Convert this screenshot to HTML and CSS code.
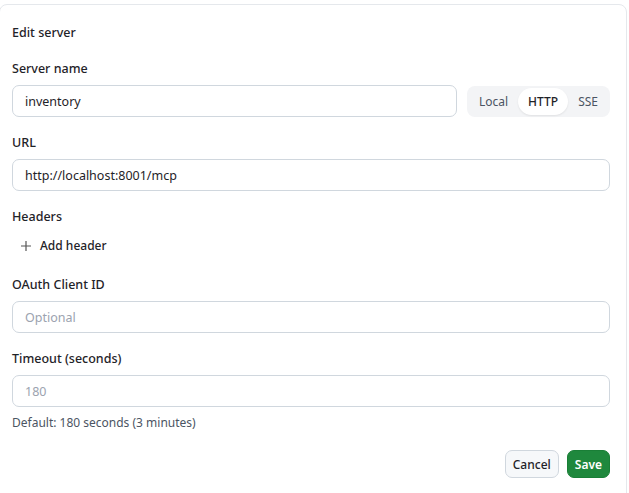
FILE: index.html
```html
<!DOCTYPE html>
<html>
<head>
    <title>Edit server</title>
    <link rel="stylesheet" href="styles.css">
</head>
<body>
    <div class="card">
        <h2 class="title">Edit server</h2>

        <div class="form-group">
            <label for="name">Server name</label>
            <div class="name-row">
                <input type="text" id="name" value="inventory">
                <div class="segmented">
                    <button type="button" class="seg">Local</button>
                    <button type="button" class="seg active">HTTP</button>
                    <button type="button" class="seg">SSE</button>
                </div>
            </div>
        </div>

        <div class="form-group">
            <label for="url">URL</label>
            <input type="text" id="url" value="http://localhost:8001/mcp">
        </div>

        <div class="form-group headers">
            <label>Headers</label>
            <button type="button" class="add-btn">
                <svg width="12" height="12" viewBox="0 0 12 12"><path d="M6 1v10M1 6h10" stroke="#555" stroke-width="1.2" fill="none"/></svg>
                Add header
            </button>
        </div>

        <div class="form-group">
            <label for="client">OAuth Client ID</label>
            <input type="text" id="client" placeholder="Optional">
        </div>

        <div class="form-group">
            <label for="timeout">Timeout (seconds)</label>
            <input type="text" id="timeout" placeholder="180">
            <p class="hint">Default: 180 seconds (3 minutes)</p>
        </div>

        <div class="actions">
            <button type="button" class="btn cancel">Cancel</button>
            <button type="button" class="btn save">Save</button>
        </div>
    </div>
</body>
</html>
```

FILE: styles.css
```css
body {
    margin: 0;
    background: #fff;
    font-family: "Noto Sans", "Open Sans", sans-serif;
    font-size: 12.5px;
    color: #1f2328;
}

.card {
    margin: 4px 2px 0 -1px;
    padding: 15px 16px 40px 12px;
    border: 1px solid #e5e8ec;
    border-radius: 8px;
    min-height: 500px;
}

.title {
    margin: 0 0 13px;
    font-size: 12.5px;
    font-weight: 500;
    line-height: 26px;
}

.form-group {
    margin-bottom: 16px;
}

.headers {
    margin-bottom: 17px;
}

label {
    display: block;
    font-weight: 500;
    line-height: 20px;
    margin-bottom: 6px;
}

input[type="text"] {
    box-sizing: border-box;
    width: 100%;
    height: 32px;
    padding: 0 12px;
    border: 1px solid #d0d7de;
    border-radius: 7px;
    font: inherit;
    color: #1f2328;
}

input::placeholder {
    color: #9ca3af;
}

.name-row {
    display: flex;
    gap: 10px;
    align-items: center;
}

.name-row input {
    flex: 1;
}

.segmented {
    display: flex;
    padding: 2px;
    background: #f3f4f6;
    border-radius: 8px;
}

.seg {
    border: none;
    background: none;
    font: inherit;
    font-size: 12px;
    color: #4b5563;
    padding: 0 10px;
    height: 27px;
    border-radius: 14px;
}

.seg.active {
    background: #fff;
    color: #1f2328;
    font-weight: 500;
    box-shadow: 0 1px 2px rgba(0, 0, 0, 0.08);
}

.add-btn {
    display: flex;
    align-items: center;
    gap: 8px;
    border: none;
    background: none;
    font: inherit;
    font-size: 12px;
    font-weight: 500;
    color: #1f2328;
    padding: 4px 8px;
    margin-top: 2px;
}

.hint {
    margin: 7px 0 0;
    font-size: 12px;
    color: #4b5563;
}

.actions {
    display: flex;
    justify-content: flex-end;
    gap: 8px;
    margin-top: 19px;
}

.btn {
    height: 28px;
    padding: 0 7px;
    border-radius: 7px;
    font: inherit;
    font-size: 12px;
    font-weight: 500;
}

.cancel {
    background: #f6f8fa;
    border: 1px solid #d0d7de;
    color: #1f2328;
}

.save {
    background: #1f883d;
    border: 1px solid #1a7f37;
    color: #fff;
    font-weight: 600;
}
```
